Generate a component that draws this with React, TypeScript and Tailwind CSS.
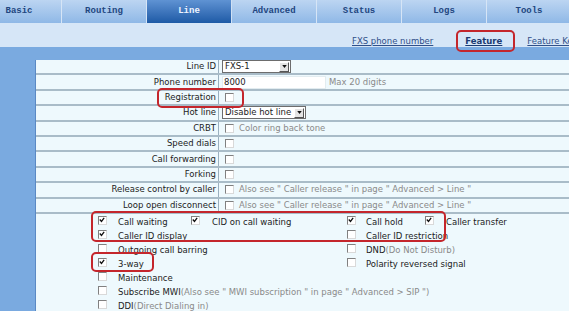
import React from "react";

function Cb({ checked = false, className = "" }: { checked?: boolean; className?: string }) {
  return (
    <span
      className={
        "relative inline-block w-[9px] h-[9px] shrink-0 bg-white border border-t-[#808080] border-l-[#808080] border-r-[#d9d9d9] border-b-[#d9d9d9] " +
        className
      }
    >
      {checked && (
        <svg viewBox="0 0 9 9" className="absolute left-0 top-0 w-[7px] h-[7px]">
          <path d="M1 3.2 L3.2 5.6 L6.6 1.2" stroke="#111" strokeWidth="1.7" fill="none" />
        </svg>
      )}
    </span>
  );
}

function Arrow() {
  return (
    <span className="w-[10px] h-[10px] bg-[#e4e4e4] border border-t-white border-l-white border-r-[#555] border-b-[#555] flex items-center justify-center">
      <svg viewBox="0 0 6 4" className="w-[5px] h-[3px]">
        <path d="M0 0 L6 0 L3 4 Z" fill="#111" />
      </svg>
    </span>
  );
}

type Row = { label: string; value: React.ReactNode };

const hint = 'Also see " Caller release " in page " Advanced > Line "';

const rows: Row[] = [
  {
    label: "Line ID",
    value: (
      <div className="flex items-center justify-between w-[69px] h-[13px] bg-white border border-[#6d6d6d] pl-[2px] pr-[1px]">
        <span>FXS-1</span>
        <Arrow />
      </div>
    ),
  },
  {
    label: "Phone number",
    value: (
      <div className="flex items-center">
        <div className="w-[104px] h-[13px] bg-white border border-[#e2ecf0] pl-[1px] flex items-center">8000</div>
        <span className="ml-[3px] text-[#8a8a8a]">Max 20 digits</span>
      </div>
    ),
  },
  { label: "Registration", value: <Cb className="ml-[3px]" /> },
  {
    label: "Hot line",
    value: (
      <div className="flex items-center justify-between w-[84px] h-[13px] bg-white border border-[#6d6d6d] pl-[2px] pr-[1px]">
        <span>Disable hot line</span>
        <Arrow />
      </div>
    ),
  },
  {
    label: "CRBT",
    value: (
      <div className="flex items-center">
        <Cb className="ml-[3px]" />
        <span className="ml-[5px] text-[#8a8a8a]">Color ring back tone</span>
      </div>
    ),
  },
  { label: "Speed dials", value: <Cb className="ml-[3px]" /> },
  { label: "Call forwarding", value: <Cb className="ml-[3px]" /> },
  { label: "Forking", value: <Cb className="ml-[3px]" /> },
  {
    label: "Release control by caller",
    value: (
      <div className="flex items-center">
        <Cb className="ml-[3px]" />
        <span className="ml-[5px] text-[#8a8a8a] whitespace-nowrap">{hint}</span>
      </div>
    ),
  },
  {
    label: "Loop open disconnect",
    value: (
      <div className="flex items-center">
        <Cb className="ml-[3px]" />
        <span className="ml-[5px] text-[#8a8a8a] whitespace-nowrap">{hint}</span>
      </div>
    ),
  },
];

const tabs = ["Basic", "Routing", "Line", "Advanced", "Status", "Logs", "Tools"];

export default function App() {
  return (
    <div
      className="relative w-[569px] h-[311px] overflow-hidden bg-white text-[8.5px] text-[#1c1c1c]"
      style={{ fontFamily: '"DejaVu Sans", Verdana, sans-serif' }}
    >
      {/* Top tabs */}
      <div className="flex h-[23px] -ml-[23px] font-['Liberation_Mono',monospace] font-bold text-[9px] bg-gradient-to-b from-[#bcd5f2] to-[#8fb8e6]">
        {tabs.map((t) => (
          <div
            key={t}
            className={
              t === "Line"
                ? "w-[85px] shrink-0 flex items-center justify-center text-[#eef4ff] bg-gradient-to-b from-[#5f93d3] to-[#1d5aa6] border-r border-[#cfe0f4]"
                : "w-[85px] shrink-0 flex items-center justify-center text-[#22467f] bg-gradient-to-b from-[#bcd5f2] to-[#8fb8e6] border-r border-[#d6e5f6]"
            }
          >
            {t}
          </div>
        ))}
      </div>

      {/* Sub navigation */}
      <div className="h-[24px] bg-[#d6e6f7] flex items-end leading-[10px] pb-[1px] pl-[352px] whitespace-nowrap text-[#30508a]">
        <span className="underline">FXS phone number</span>
        <span className="ml-[32px] underline font-bold text-[#1b3a72]">Feature</span>
        <span className="ml-[25px] underline">Feature Key</span>
      </div>

      {/* Blue band */}
      <div className="h-[13px] bg-[#7aaae0]" />

      {/* Main area */}
      <div className="flex">
        <div className="w-[36px] shrink-0 h-[260px] bg-[#7aaae0] border-r border-[#5a89c4]" />
        <div className="flex-1 bg-[#eef9fd]">
          {rows.map((r) => (
            <div key={r.label} className="flex h-[15.4px] border-b-2 border-[#a9bcc8] whitespace-nowrap">
              <div className="w-[183px] shrink-0 flex items-center justify-end pr-[2px] border-r border-[#9ab0bf]">
                {r.label}
              </div>
              <div className="flex items-center pl-[3px]">{r.value}</div>
            </div>
          ))}

          {/* Feature options */}
          <div className="pt-[1px] whitespace-nowrap">
            <div className="flex items-center h-[14px] pl-[62px]">
              <span className="w-[20px]"><Cb checked /></span>
              <span className="w-[73px]">Call waiting</span>
              <span className="w-[21px]"><Cb checked /></span>
              <span className="w-[135px]">CID on call waiting</span>
              <span className="w-[19px]"><Cb checked /></span>
              <span className="w-[59px]">Call hold</span>
              <span className="w-[21px]"><Cb checked /></span>
              <span>Caller transfer</span>
            </div>
            <div className="flex items-center h-[14px] pl-[62px]">
              <span className="w-[20px]"><Cb checked /></span>
              <span className="w-[229px]">Caller ID display</span>
              <span className="w-[19px]"><Cb /></span>
              <span>Caller ID restriction</span>
            </div>
            <div className="flex items-center h-[14px] pl-[62px]">
              <span className="w-[20px]"><Cb /></span>
              <span className="w-[229px]">Outgoing call barring</span>
              <span className="w-[19px]"><Cb /></span>
              <span>
                DND<span className="text-[#8a8a8a]">(Do Not Disturb)</span>
              </span>
            </div>
            <div className="flex items-center h-[14px] pl-[62px]">
              <span className="w-[20px]"><Cb checked /></span>
              <span className="w-[229px]">3-way</span>
              <span className="w-[19px]"><Cb /></span>
              <span>Polarity reversed signal</span>
            </div>
            <div className="flex items-center h-[14px] pl-[62px]">
              <span className="w-[20px]"><Cb /></span>
              <span>Maintenance</span>
            </div>
            <div className="flex items-center h-[14px] pl-[62px]">
              <span className="w-[20px]"><Cb /></span>
              <span>
                Subscribe MWI
                <span className="text-[#8a8a8a]">(Also see " MWI subscription " in page " Advanced &gt; SIP ")</span>
              </span>
            </div>
            <div className="flex items-center h-[14px] pl-[62px]">
              <span className="w-[20px]"><Cb /></span>
              <span>
                DDI<span className="text-[#8a8a8a]">(Direct Dialing in)</span>
              </span>
            </div>
          </div>
        </div>
      </div>

      {/* Red annotation boxes */}
      <div className="absolute left-[456px] top-[30px] w-[59px] h-[22px] border-2 border-[#c4262c] rounded-[5px]" />
      <div className="absolute left-[157px] top-[88px] w-[87px] h-[20px] border-2 border-[#c4262c] rounded-[5px]" />
      <div className="absolute left-[91px] top-[211px] w-[355px] h-[31px] border-2 border-[#c4262c] rounded-[5px]" />
      <div className="absolute left-[91px] top-[252px] w-[63px] h-[20px] border-2 border-[#c4262c] rounded-[5px]" />
    </div>
  );
}
